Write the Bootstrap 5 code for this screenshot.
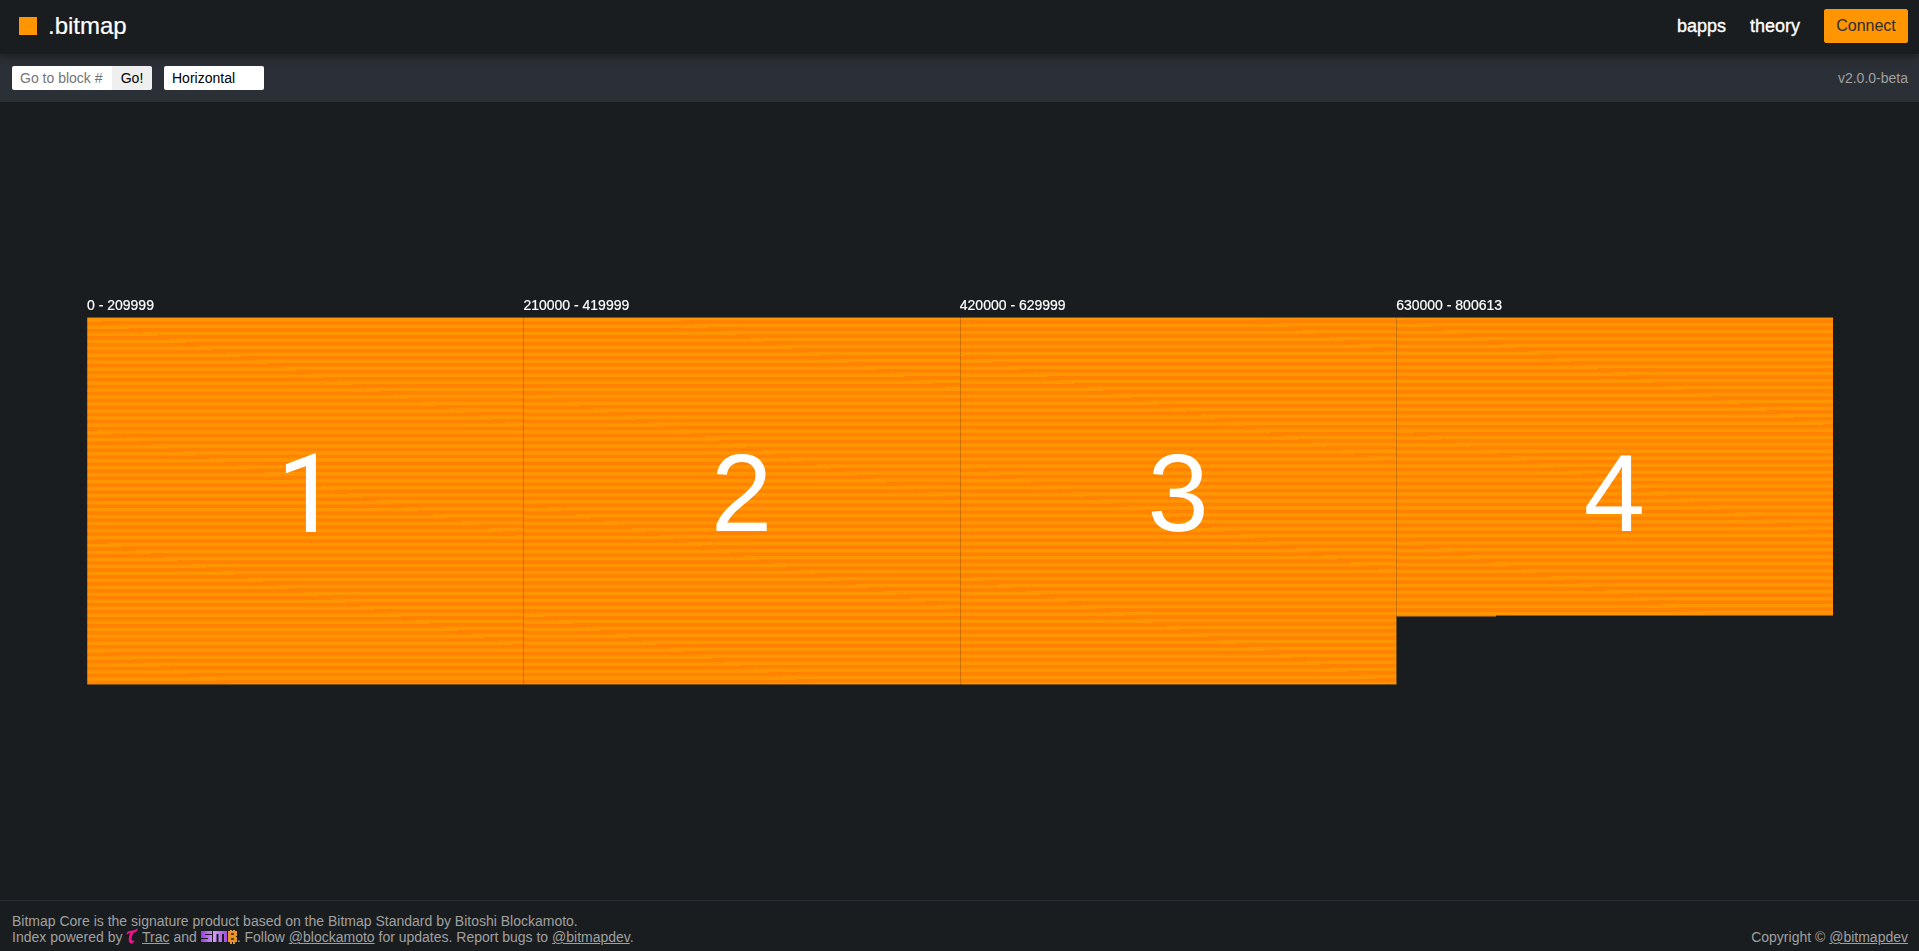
<!DOCTYPE html>
<html lang="en">
<head>
<meta charset="utf-8">
<meta name="viewport" content="width=device-width, initial-scale=1">
<title>.bitmap</title>
<link href="https://cdn.jsdelivr.net/npm/bootstrap@5.3.0/dist/css/bootstrap.min.css" rel="stylesheet">
<style>
  body { background: #191d1f; color: #fff; font-family: "Liberation Sans", Arial, sans-serif; height: 100vh; overflow: hidden; }
  .topbar { height: 54px; padding: 0 11px 2px 19px; box-shadow: 0 2px 8px rgba(0,0,0,.4); z-index: 2; background: #191d1f; position: relative; }
  .logo-square { width: 18px; height: 18px; background: #ff9500; }
  .brand-name { font-size: 24px; line-height: 1; color: #fff; margin-left: 11px; -webkit-text-stroke: .2px #fff; }
  .menu-link { font-size: 18px; color: #fff; text-decoration: none; -webkit-text-stroke: .35px #fff; }
  .btn-connect { --bs-btn-bg: #ff9500; --bs-btn-color: #2b2f36; --bs-btn-border-color: #ff9500; --bs-btn-padding-y: 0; --bs-btn-padding-x: 0; --bs-btn-font-size: 16px; --bs-btn-border-radius: 2px; width: 84px; height: 34px; }
  .toolbar { height: 48px; background: #2b2f36; padding: 0 11px 0 12px; font-size: 14px; }
  .jump { width: 140px; height: 24px; }
  .jump input { width: 100px; border: 0; border-radius: 2px 0 0 2px; padding: 0 8px; font-size: 14px; color: #000; }
  .jump input::placeholder { color: #757575; }
  .jump button { width: 40px; border: 0; border-radius: 0 2px 2px 0; padding: 0; background: #efefef; color: #000; font-size: 14px; }
  .mode { width: 100px; height: 24px; border: 0; border-radius: 2px; background: #fff; color: #000; padding: 0 8px; font-size: 14px; appearance: none; }
  .muted { color: #a0a0a0; }
  .halvings { padding: 195px 86px 0 87px; }
  .stage { width: 1746px; height: 388px; position: relative; }
  .stage canvas { position: absolute; left: 0; top: 20px; }
  .halving { width: 436.4px; position: relative; }
  .range-label { font-size: 14px; line-height: 16px; height: 20px; color: #fff; -webkit-text-stroke: .2px #fff; }
  .numeral { height: 352px; font-size: 110px; line-height: 1; color: #fff; }
  .numeral-one { font-family: Roboto, "Liberation Sans", sans-serif; height: 355px; padding-left: 5px; }
  footer { border-top: 1px solid #2b2f36; height: 51px; padding: 12px 11px 0 12px; font-size: 14px; line-height: 16px; color: #a0a0a0; }
  footer a { color: inherit; }
  footer svg { margin: -4px 0; vertical-align: 2px; }
</style>
<script src="https://cdn.jsdelivr.net/npm/bootstrap@5.3.0/dist/js/bootstrap.bundle.min.js"></script>
</head>
<body class="d-flex flex-column">
<header class="topbar d-flex align-items-center justify-content-between flex-shrink-0">
  <div class="d-flex align-items-center"><span class="logo-square"></span><span class="brand-name">.bitmap</span></div>
  <nav class="d-flex align-items-center gap-4">
    <a class="menu-link" href="#">bapps</a><a class="menu-link" href="#">theory</a>
    <button class="btn btn-connect">Connect</button>
  </nav>
</header>
<div class="toolbar d-flex align-items-center flex-shrink-0">
  <form class="jump d-flex me-2"><input type="text" placeholder="Go to block #"><button type="button">Go!</button></form>
  <select class="mode ms-1"><option>Horizontal</option></select>
  <span class="muted ms-auto">v2.0.0-beta</span>
</div>
<main class="halvings flex-grow-1">
  <div class="stage d-flex">
    <canvas id="blocks" width="1747" height="368"></canvas>
    <section class="halving flex-shrink-0"><div class="range-label">0 - 209999</div><div class="numeral numeral-one d-flex align-items-center justify-content-center">1</div></section>
    <section class="halving flex-shrink-0"><div class="range-label">210000 - 419999</div><div class="numeral d-flex align-items-center justify-content-center">2</div></section>
    <section class="halving flex-shrink-0"><div class="range-label">420000 - 629999</div><div class="numeral d-flex align-items-center justify-content-center">3</div></section>
    <section class="halving flex-shrink-0"><div class="range-label">630000 - 800613</div><div class="numeral d-flex align-items-center justify-content-center">4</div></section>
  </div>
</main>
<footer class="d-flex justify-content-between align-items-start flex-shrink-0">
  <div>Bitmap Core is the signature product based on the Bitmap Standard by Bitoshi Blockamoto.<br>Index powered by
    <svg width="12" height="16" viewBox="0 0 12 16"><path d="M.3 6.800C.8 3.500 2.800 2.700 5.500 2.700Q9 2.800 11.800.3Q11.500 4.200 7.200 5Q5.200 9 5.700 11.800Q6.200 13.600 8.700 12.300Q7.700 15.600 5 15.400C1.500 14.700 2.700 9 4.300 5.300Q2 5 .3 6.800Z" fill="#f0148c"/></svg>
    <a href="#">Trac</a> and
    <svg width="36" height="14" viewBox="0 0 36 14"><defs><linearGradient id="violet"><stop stop-color="#9a3de0"/><stop offset=".5" stop-color="#d29af8"/><stop offset="1" stop-color="#a04be0"/></linearGradient></defs><path d="M0 1H11V4H4V5H11V12H0V9H7V8H0ZM12 1H26V12H23V4H21V12H17.500V4H15.500V12H12Z" fill="url(#violet)"/><path d="M27 1H29V0H31V1H32V0H34V1H36V6H35V7H36V12H34V14H32V12H31V14H29V12H27Z" fill="#e8942a"/><path d="M30 3H33V5H30ZM30 8H33V10H30Z" fill="#6b3b0c"/></svg>. Follow <a href="#">@blockamoto</a> for updates. Report bugs to <a href="#">@bitmapdev</a>.</div>
  <div class="pt-3">Copyright © <a href="#">@bitmapdev</a></div>
</footer>
<script>
  // 500 blocks per row; the shade alternates every 2016-block difficulty epoch.
  var stage = document.getElementById('blocks').getContext('2d');
  var perHalving = 210000, lastBlock = 800613, cell = 0.8728;

  // Thin brown rim under the block field.
  stage.fillStyle = '#7a5116';
  stage.fillRect(0, 0, 1746, 299);
  stage.fillRect(0, 299, 1310, 69);
  stage.fillRect(1309, 299, 100, 1);

  for (var n = 0; n < 4; n++) {
    var tile = document.createElement('canvas');
    tile.width = 500; tile.height = 420;
    var g = tile.getContext('2d'), img = g.createImageData(500, 420);
    for (var k = 0; k < perHalving && n * perHalving + k <= lastBlock; k++) {
      var odd = Math.floor((n * perHalving + k) / 2016) % 2;
      img.data[k * 4] = 255;
      img.data[k * 4 + 1] = odd ? 130 : 149;
      img.data[k * 4 + 3] = 255;
    }
    g.putImageData(img, 0, 0);
    stage.drawImage(tile, 0.2 + n * 436.4, 0.6, 500 * cell, 420 * cell);
  }

  // Seams between neighbouring halvings.
  stage.fillStyle = 'rgba(25,29,31,.22)';
  stage.fillRect(436, 0, 1, 368);
  stage.fillRect(873, 0, 1, 368);
  stage.fillRect(1309, 0, 1, 299);
  stage.fillRect(0, 0, 1, 368);
</script>
</body>
</html>
